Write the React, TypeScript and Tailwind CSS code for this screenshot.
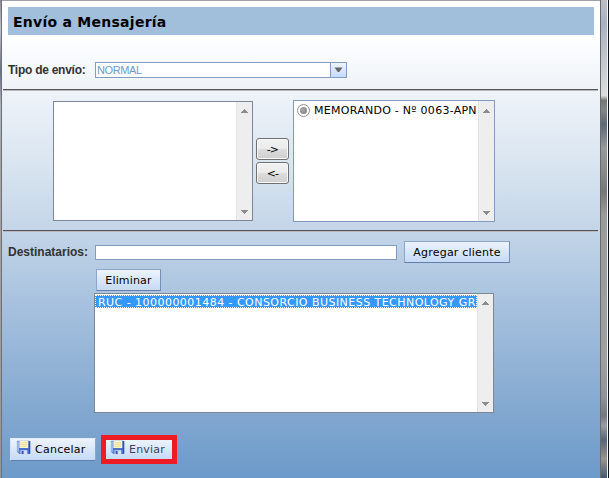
import type { ReactNode } from 'react';

const verdana = 'font-["DejaVu_Sans",sans-serif]';

function ScrollBar({ className = '' }: { className?: string }) {
  return (
    <div className={`flex w-4 shrink-0 flex-col items-center justify-between border-l border-[#e2e2e2] bg-[#eeeeee] ${className}`}>
      <svg width="7" height="4" viewBox="0 0 7 4" shapeRendering="crispEdges">
        <path d="M3 0h1v1h1v1h1v1h1v1H0V3h1V2h1V1h1z" fill="#8c8c8c" />
      </svg>
      <svg width="7" height="4" viewBox="0 0 7 4" shapeRendering="crispEdges">
        <path d="M0 0h7v1H6v1H5v1H4v1H3V3H2V2H1V1H0z" fill="#8c8c8c" />
      </svg>
    </div>
  );
}

function Rule() {
  return <div className="mr-[2px] ml-px h-[2px] border-t border-b border-t-[#555459] border-b-[#b9b8bc]" />;
}

function ArrowButton({ children }: { children: ReactNode }) {
  return (
    <button className="flex h-[22px] w-[33px] items-center justify-center rounded-[3px] border border-[#707070] bg-[linear-gradient(#f2f2f2_0%,#ebebeb_48%,#dcdcdc_50%,#cfcfcf_100%)] text-[11px] leading-none tracking-[-0.8px] text-black shadow-[inset_0_0_0_1px_#f8f8f8]">
      {children}
    </button>
  );
}

function SaveIcon() {
  return (
    <svg width="15" height="15" viewBox="0 0 15 15" className="shrink-0">
      <path d="M1.5.8h11.8l.9 1v11.4l-.8.9H3.3L.9 11.8V1.4z" fill="#5b80d6" />
      <path d="M1 1.5h2v10.2l-2-.2z" fill="#9ab5ee" />
      <path d="M12.6 1h1.6v12.4l-.8.7h-.8z" fill="#2f52b3" />
      <path d="M3.4.8h8.8v7.4H3.4z" fill="#fbf6c9" />
      <path d="M4.4 2.6h6.8M4.4 4.4h6.8M4.4 6.2h6.8" stroke="#e3d68c" strokeWidth=".8" />
      <path d="M3 8.3h9.6v1.2H3z" fill="#3d62c2" />
      <path d="M4.6 10.2h6.6v3.9H4.6z" fill="#d3def5" />
      <path d="M5.6 10.8h2v3.3h-2z" fill="#3454ac" />
    </svg>
  );
}

const button =
  'flex items-center border border-t-[#8da5c6] border-l-[#8da5c6] border-r-[#7590b6] border-b-[#6480a8] bg-[linear-gradient(#edf3fd,#c5daf6)] text-black';

export default function App() {
  return (
    <div className={`flex h-[478px] w-[609px] overflow-hidden ${verdana}`}>
      <div className="w-px bg-[linear-gradient(#8e8b98_0%,#bcc2d1_6%,#657083_15%,#aeb6c5_22%,#a6a6a6_32%,#969696_100%)]" />
      <div className="w-px bg-[#707176]" />
      <main className="w-[598px] border-t border-[#a09fa6] bg-[linear-gradient(#ffffff_0%,#fdfeff_8%,#edf2f8_20%,#dbe6f1_33%,#c3d5e8_48%,#a6c1de_64%,#84a9d0_85%,#6c9aca_100%)]">
        <header className="mt-[6px] mr-[6px] ml-[6px] flex h-[28px] items-center bg-[#a1bedb] pt-[2px] pl-[5px]">
          <h1 className="text-[14px] leading-none font-bold tracking-[0.26px] whitespace-nowrap text-black">Envío a Mensajería</h1>
        </header>

        <section className="mt-[27px] flex h-[16px] items-center pl-[6px]">
          <label className='w-[87px] font-["Liberation_Sans",Arial,sans-serif] text-[12px] leading-none font-bold tracking-[-0.26px] whitespace-nowrap text-[#333333]'>Tipo de envío:</label>
          <div className="flex h-4 w-[252px] border border-[#829dc3] bg-white">
            <span className='flex-1 pt-[2px] pl-px font-["Liberation_Sans",Arial,sans-serif] text-[11px] leading-none tracking-[-0.4px] text-[#6d98c8]'>NORMAL</span>
            <span className="flex w-4 items-center justify-center border-l border-[#829dc3] bg-[linear-gradient(#edf4ff,#c5dafb)]">
              <svg width="9" height="6" viewBox="0 0 9 6"><path d="M.5.5h8L5.2 5H3.8z" fill="#646668" /></svg>
            </span>
          </div>
        </section>
        <div className="h-[11px]" />
        <Rule />

        <section className="mt-[9px] flex h-[122px] pl-[51px]">
          <div className="mt-px flex h-[120px] w-[200px] justify-end border border-[#7d8796] bg-white">
            <ScrollBar className="pt-[7px] pb-[6px]" />
          </div>
          <div className="mt-[38px] ml-[3px] flex flex-col gap-[2px]">
            <ArrowButton>-&gt;</ArrowButton>
            <ArrowButton>&lt;-</ArrowButton>
          </div>
          <div className="ml-1 flex h-[122px] w-[202px] border border-[#829abc] bg-white">
            <div className="flex h-[18px] min-w-0 flex-1 items-center overflow-hidden pl-[3px]">
              <span className="flex size-[13px] shrink-0 items-center justify-center rounded-full border border-[#8d8f92] bg-white">
                <span className="size-[7px] rounded-full bg-[radial-gradient(circle_at_40%_40%,#aaaaaa,#777777)]" />
              </span>
              <span className="ml-[4px] text-[11px] leading-none tracking-[0.27px] whitespace-nowrap text-black">MEMORANDO - Nº 0063-APN</span>
            </div>
            <ScrollBar className="pt-[8px] pb-[6px]" />
          </div>
        </section>
        <div className="h-2" />
        <Rule />

        <section className="mt-[9px] flex h-[22px] items-center pl-[6px]">
          <label className='w-[87px] font-["Liberation_Sans",Arial,sans-serif] text-[12px] leading-none font-bold whitespace-nowrap text-[#333333]'>Destinatarios:</label>
          <div className="h-[15px] w-[302px] border border-[#829dbe] bg-white" />
          <button className={`${button} ml-[7px] h-[22px] w-[106px] justify-center pt-px text-[11px] leading-none tracking-[0.2px] whitespace-nowrap`}>Agregar cliente</button>
        </section>
        <button className={`${button} mt-[6px] ml-[94px] h-[22px] w-[65px] justify-center pt-px text-[11px] leading-none tracking-[0.15px]`}>Eliminar</button>
        <div className="mt-[2px] ml-[92px] flex h-[120px] w-[400px] border border-[#7d8796] bg-white">
          <div className="min-w-0 flex-1 pt-px">
            <div className="flex h-[13px] items-center overflow-hidden border border-dotted border-white bg-[#3399ff] pt-[2px] pl-[2px] text-[11px] leading-none tracking-[0.46px] whitespace-nowrap text-white">RUC - 100000001484 - CONSORCIO BUSINESS TECHNOLOGY GR</div>
          </div>
          <ScrollBar className="pt-[7px] pb-[6px]" />
        </div>

        <footer className="mt-[22px] flex items-center pl-2">
          <button className="flex h-[23px] w-[86px] items-center border border-t-[#e4edf9] border-r-[#8aa5ce] border-b-[#6380ac] border-l-[#d7e4f5] bg-[linear-gradient(#edf3fd,#c5daf6)] pl-[5px] text-[11px] text-black">
            <span className="-mt-[4px]"><SaveIcon /></span><span className="mt-px ml-1 tracking-[0.25px]">Cancelar</span>
          </button>
          <div className="ml-[5px] h-[29px] w-[76px] border-5 border-[#ed1c24]">
            <button className="flex h-[19px] w-full items-center bg-[linear-gradient(#edf3fd,#c5daf6)] pl-1 text-[11px] text-[#38445e]">
              <span className="-mt-[5px]"><SaveIcon /></span><span className="mt-px ml-1 tracking-[0.2px]">Enviar</span>
            </button>
          </div>
        </footer>
      </main>
      <div className="w-px bg-[#696d73]" />
      <div className="w-[6px] bg-[linear-gradient(#bcbfc5_0%,#a9b2bf_5%,#bdc3cb_11%,#dcdcdc_20%,#777777_21%,#858585_23%,#5d6878_26%,#9a9a9a_31%,#858585_37%,#777777_40%,#9b9b9b_45%,#a0a0a0_75%,#8f939a_83%,#737881_87%,#999da3_89%,#596575_92%,#99958e_96%,#465a73_100%)]" />
      <div className="w-px bg-[#f1f3f7]" />
      <div className="w-px bg-[#11151d]" />
    </div>
  );
}
